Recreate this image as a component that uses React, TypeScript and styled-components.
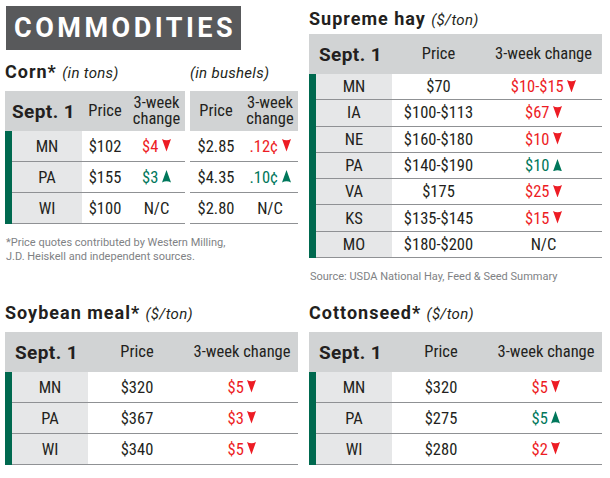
import React from "react";
import styled, { createGlobalStyle } from "styled-components";

const RED = "#ed1c24";
const GREEN_TXT = "#00775b";
const BAR = "#00694f";

const GlobalStyle = createGlobalStyle`
  html, body { margin: 0; padding: 0; background: #ffffff; }
  body {
    font-family: Roboto, "Liberation Sans", Arial, sans-serif;
    font-stretch: 77%;
    color: #231f20;
  }
`;

const Page = styled.div`
  display: grid;
  grid-template-columns: 293px 293px;
  column-gap: 11px;
  row-gap: 18px;
  padding: 6px 0 0 5px;
  width: 610px;
  box-sizing: border-box;
`;

const Column = styled.div<{ $top?: number }>`
  display: flex;
  flex-direction: column;
  padding-top: ${(p) => p.$top ?? 0}px;
`;

const Banner = styled.div`
  width: 235px;
  height: 44px;
  margin-left: 1px;
  box-sizing: border-box;
  padding-left: 8px;
  display: flex;
  align-items: center;
  background: #58595b;
  color: #ffffff;
  font-family: Roboto, "Liberation Sans", sans-serif;
  font-stretch: 100%;
  font-weight: 700;
  font-size: 27px;
  letter-spacing: 3.5px;
`;

const Title = styled.div<{ $mt?: number; $mb: number }>`
  font-family: Roboto, "Liberation Sans", sans-serif;
  font-stretch: 100%;
  font-weight: 700;
  font-size: 18px;
  line-height: 22px;
  letter-spacing: 1px;
  white-space: nowrap;
  margin-top: ${(p) => p.$mt ?? 0}px;
  margin-bottom: ${(p) => p.$mb}px;
`;

const Unit = styled.span`
  font-family: Roboto, "Liberation Sans", sans-serif;
  font-stretch: 100%;
  font-weight: 400;
  font-style: italic;
  font-size: 15px;
  letter-spacing: 0.3px;
`;

const CornTitleRow = styled.div`
  display: grid;
  grid-template-columns: 185px 1fr;
  margin-top: 11px;
  margin-bottom: 7px;
`;

const TablePair = styled.div`
  display: flex;
  gap: 5px;
`;

const TableBox = styled.div<{ $w?: number }>`
  width: ${(p) => (p.$w ? `${p.$w}px` : "100%")};
  display: flex;
  flex-direction: column;
`;

const HeadRow = styled.div<{ $cols: string }>`
  display: grid;
  grid-template-columns: ${(p) => p.$cols};
  align-items: center;
  height: 40px;
  background: #d1d3d4;
`;

const HeadCell = styled.div`
  text-align: center;
  font-size: 16.5px;
  line-height: 16.5px;
`;

const SeptCell = styled.div`
  text-align: center;
  font-family: Roboto, "Liberation Sans", sans-serif;
  font-stretch: 100%;
  font-weight: 700;
  font-size: 19px;
  letter-spacing: 0.4px;
`;

const Body = styled.div<{ $bar: boolean }>`
  border-left: ${(p) => (p.$bar ? `7px solid ${BAR}` : "none")};
`;

const Row = styled.div<{ $cols: string; $h: number }>`
  display: grid;
  grid-template-columns: ${(p) => p.$cols};
  height: ${(p) => p.$h}px;
  box-sizing: border-box;
  border-bottom: 1px solid #8f9194;
`;

const Cell = styled.div<{ $tone?: "up" | "down" }>`
  display: flex;
  align-items: center;
  justify-content: center;
  font-size: 16.5px;
  white-space: nowrap;
  color: ${(p) => (p.$tone === "down" ? RED : p.$tone === "up" ? GREEN_TXT : "#231f20")};
`;

const StateCell = styled(Cell)`
  background: #e6e7e8;
`;

const ArrowSvg = styled.svg`
  display: inline-block;
  width: 9px;
  height: 12.5px;
  margin-left: 3.5px;
  vertical-align: baseline;
`;

const Note = styled.div<{ $mt: number }>`
  font-family: Roboto, "Liberation Sans", sans-serif;
  font-stretch: 100%;
  font-size: 11px;
  line-height: 14px;
  color: #808285;
  margin-top: ${(p) => p.$mt}px;
  margin-left: 1px;
  white-space: nowrap;
`;

type Dir = "up" | "down" | null;

const Arrow = ({ dir }: { dir: "up" | "down" }) => (
  <ArrowSvg viewBox="0 0 9 12.5" aria-hidden>
    {dir === "down" ? (
      <path d="M0 0 Q4.5 2.6 9 0 L4.5 12.5 Z" fill={RED} />
    ) : (
      <path d="M4.5 0 L9 12.5 Q4.5 9.9 0 12.5 Z" fill={GREEN_TXT} />
    )}
  </ArrowSvg>
);

const Change = ({ text, dir }: { text: string; dir: Dir }) => (
  <Cell $tone={dir ?? undefined}>
    <span>
      {text}
      {dir && <Arrow dir={dir} />}
    </span>
  </Cell>
);

type RowData = { state: string; price: string; change: string; dir: Dir };

type TableProps = {
  head: string;
  body: string;
  rowH: number;
  rows: RowData[];
  wrapChange?: boolean;
};

const StateTable = ({ head, body, rowH, rows, wrapChange }: TableProps) => (
  <TableBox>
    <HeadRow $cols={head}>
      <SeptCell>Sept. 1</SeptCell>
      <HeadCell>Price</HeadCell>
      <HeadCell>
        {wrapChange ? (
          <>
            3-week
            <br />
            change
          </>
        ) : (
          "3-week change"
        )}
      </HeadCell>
    </HeadRow>
    <Body $bar>
      {rows.map((r) => (
        <Row key={r.state} $cols={body} $h={rowH}>
          <StateCell>{r.state}</StateCell>
          <Cell>{r.price}</Cell>
          <Change text={r.change} dir={r.dir} />
        </Row>
      ))}
    </Body>
  </TableBox>
);

const cornTons: RowData[] = [
  { state: "MN", price: "$102", change: "$4", dir: "down" },
  { state: "PA", price: "$155", change: "$3", dir: "up" },
  { state: "WI", price: "$100", change: "N/C", dir: null },
];

const cornBushels = [
  { price: "$2.85", change: ".12¢", dir: "down" as Dir },
  { price: "$4.35", change: ".10¢", dir: "up" as Dir },
  { price: "$2.80", change: "N/C", dir: null as Dir },
];

const hay: RowData[] = [
  { state: "MN", price: "$70", change: "$10-$15", dir: "down" },
  { state: "IA", price: "$100-$113", change: "$67", dir: "down" },
  { state: "NE", price: "$160-$180", change: "$10", dir: "down" },
  { state: "PA", price: "$140-$190", change: "$10", dir: "up" },
  { state: "VA", price: "$175", change: "$25", dir: "down" },
  { state: "KS", price: "$135-$145", change: "$15", dir: "down" },
  { state: "MO", price: "$180-$200", change: "N/C", dir: null },
];

const soy: RowData[] = [
  { state: "MN", price: "$320", change: "$5", dir: "down" },
  { state: "PA", price: "$367", change: "$3", dir: "down" },
  { state: "WI", price: "$340", change: "$5", dir: "down" },
];

const cotton: RowData[] = [
  { state: "MN", price: "$320", change: "$5", dir: "down" },
  { state: "PA", price: "$275", change: "$5", dir: "up" },
  { state: "WI", price: "$280", change: "$2", dir: "down" },
];

export default function App() {
  return (
    <>
      <GlobalStyle />
      <Page>
        <Column>
          <Banner>COMMODITIES</Banner>
          <CornTitleRow>
            <Title $mb={0}>
              Corn* <Unit>(in tons)</Unit>
            </Title>
            <Title $mb={0}>
              <Unit>(in bushels)</Unit>
            </Title>
          </CornTitleRow>
          <TablePair>
            <TableBox $w={180}>
              <StateTable
                head="77px 46px 1fr"
                body="70px 46px 1fr"
                rowH={31}
                rows={cornTons}
                wrapChange
              />
            </TableBox>
            <TableBox $w={108}>
              <HeadRow $cols="52px 1fr">
                <HeadCell>Price</HeadCell>
                <HeadCell>
                  3-week
                  <br />
                  change
                </HeadCell>
              </HeadRow>
              <Body $bar={false}>
                {cornBushels.map((r) => (
                  <Row key={r.price} $cols="52px 1fr" $h={31}>
                    <Cell>{r.price}</Cell>
                    <Change text={r.change} dir={r.dir} />
                  </Row>
                ))}
              </Body>
            </TableBox>
          </TablePair>
          <Note $mt={12}>
            *Price quotes contributed by Western Milling,
            <br />
            J.D. Heiskell and independent sources.
          </Note>
        </Column>

        <Column $top={2}>
          <Title $mb={3}>
            Supreme hay <Unit>($/ton)</Unit>
          </Title>
          <StateTable head="83px 93px 1fr" body="76px 93px 1fr" rowH={26.3} rows={hay} />
          <Note $mt={12}>Source: USDA National Hay, Feed &amp; Seed Summary</Note>
        </Column>

        <Column>
          <Title $mb={7}>
            Soybean meal* <Unit>($/ton)</Unit>
          </Title>
          <StateTable head="83px 98px 1fr" body="76px 98px 1fr" rowH={31} rows={soy} />
        </Column>

        <Column>
          <Title $mb={7}>
            Cottonseed* <Unit>($/ton)</Unit>
          </Title>
          <StateTable head="83px 98px 1fr" body="76px 98px 1fr" rowH={31} rows={cotton} />
        </Column>
      </Page>
    </>
  );
}
